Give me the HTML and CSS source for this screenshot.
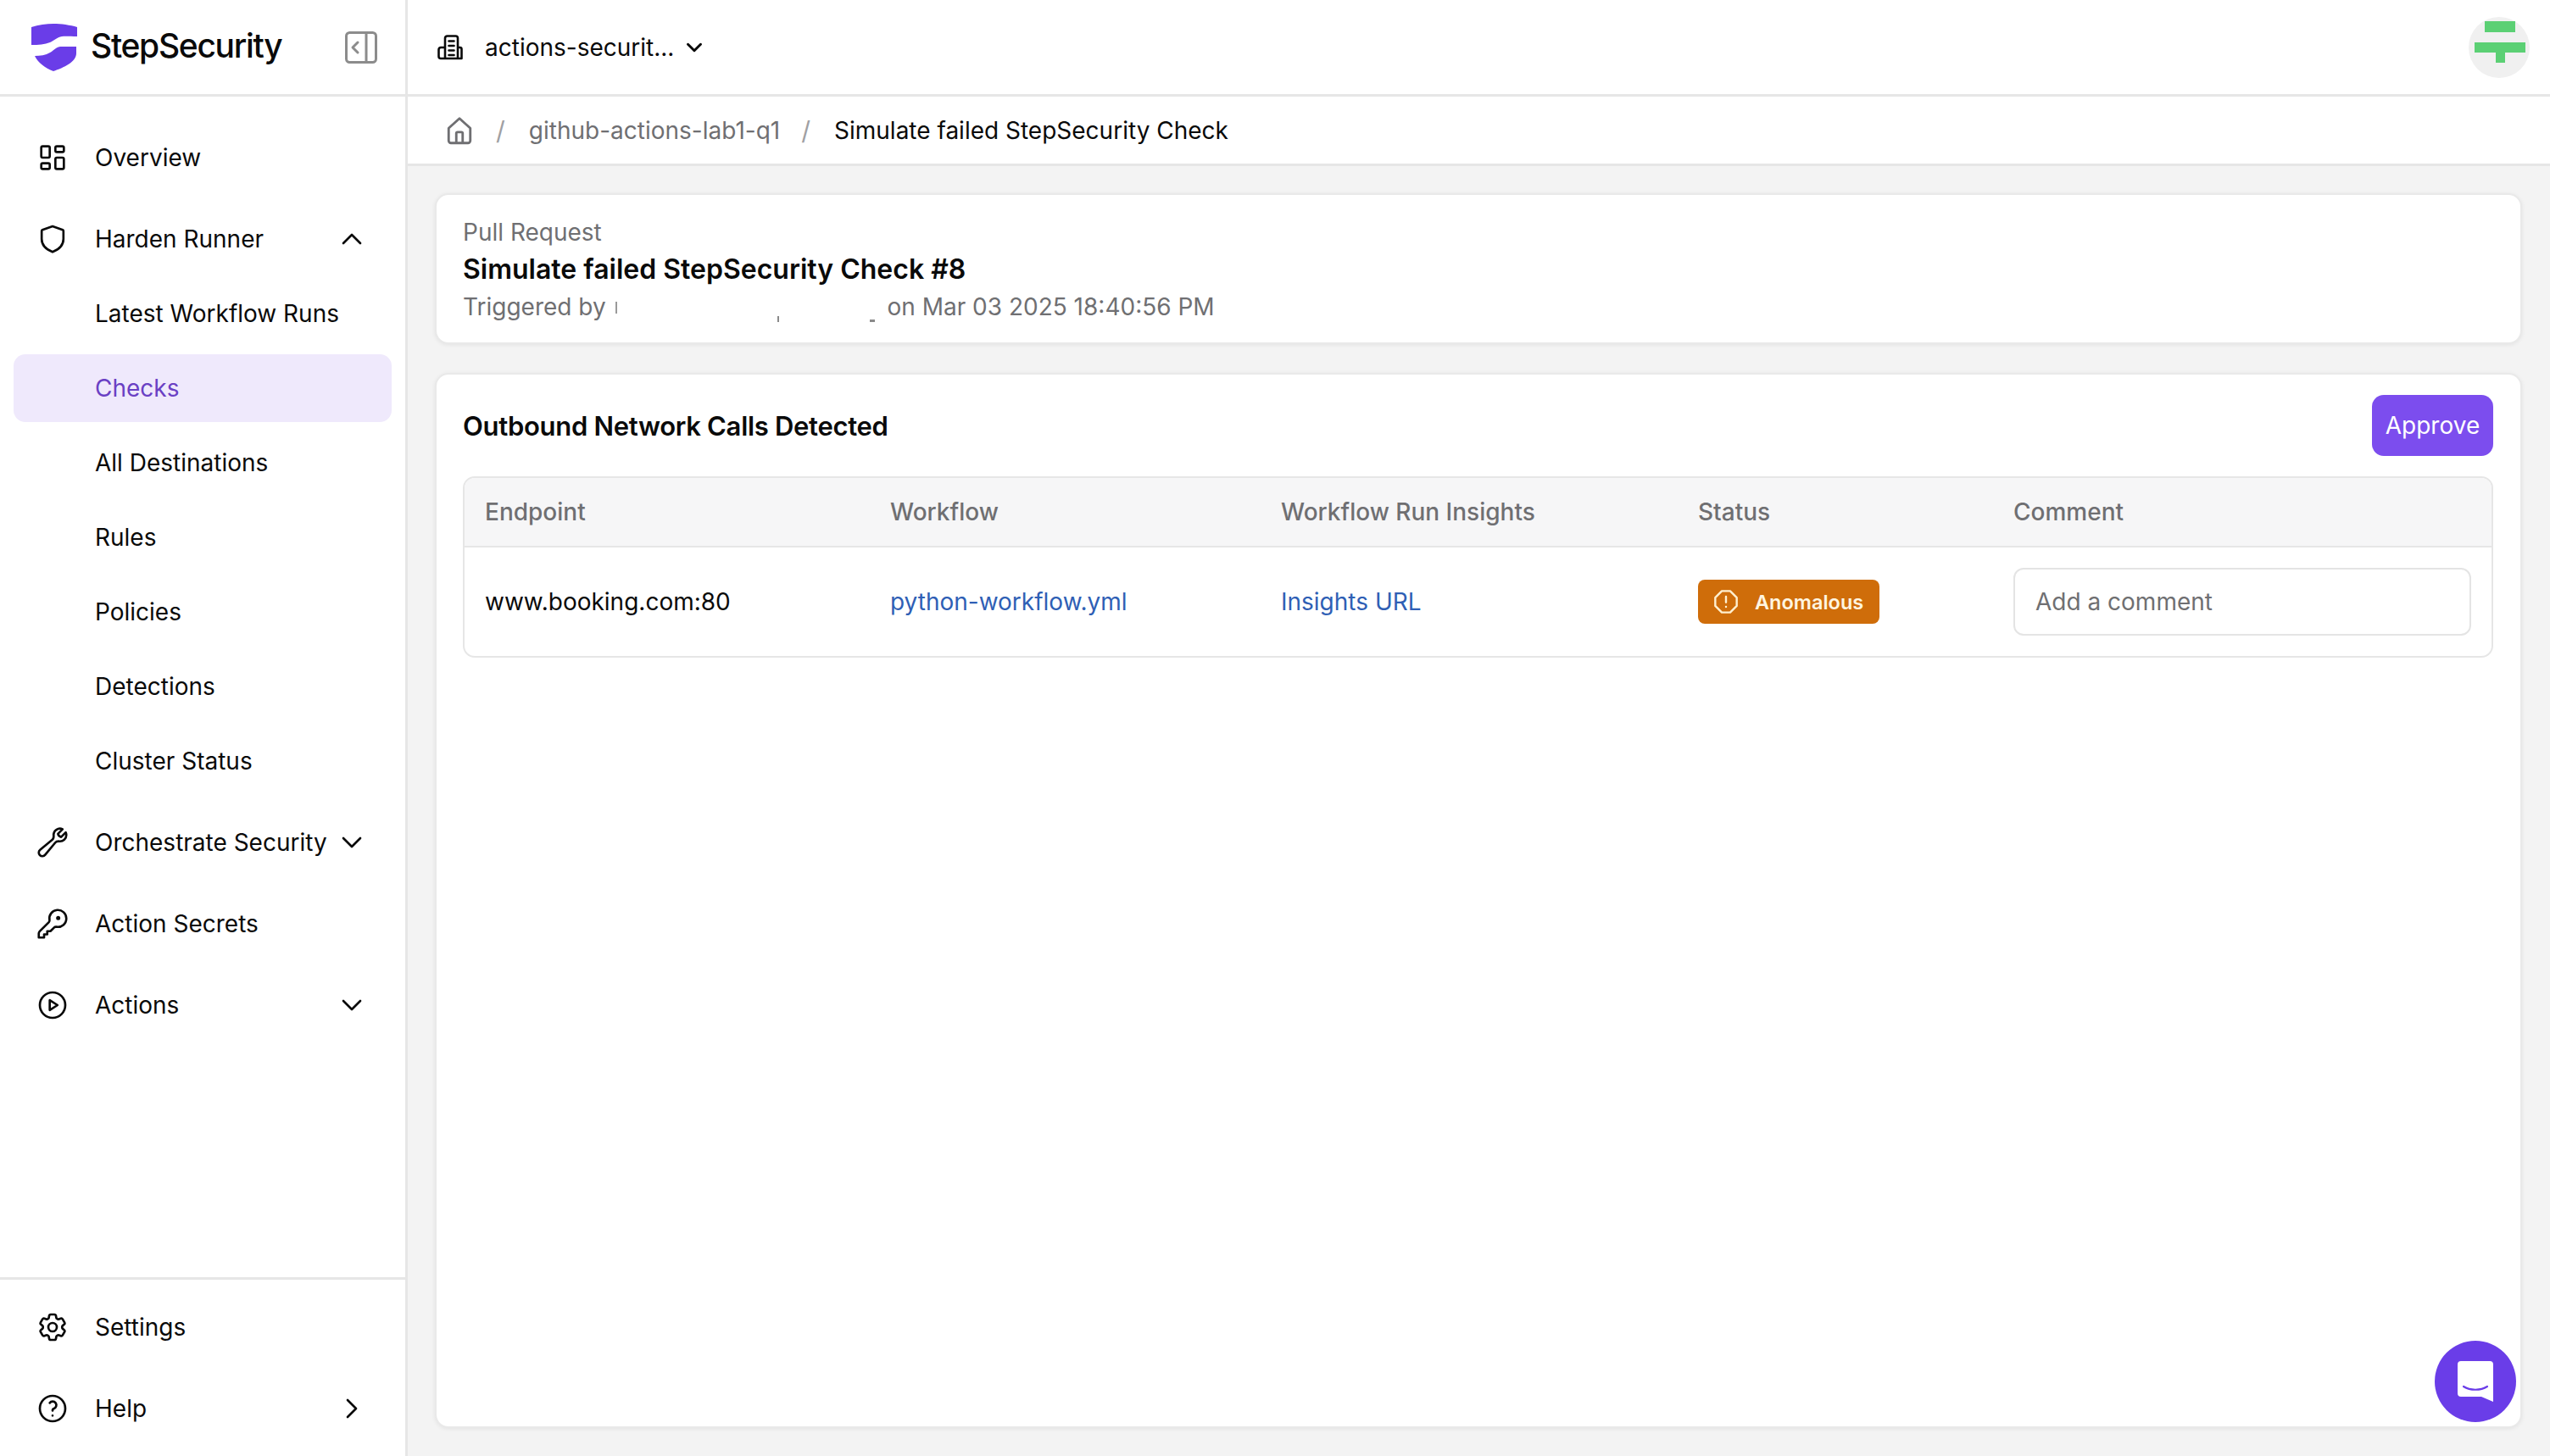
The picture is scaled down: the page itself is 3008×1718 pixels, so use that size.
FILE: index.html
```html
<!DOCTYPE html>
<html lang="en">
<head>
<meta charset="utf-8">
<title>StepSecurity</title>
<link rel="stylesheet" href="styles.css">
</head>
<body>
<aside class="sidebar">
  <div class="brand">
    <svg class="logo" viewBox="0 0 54 56"><path d="M0 4C8 1.2 18 0 26 0C35 0 46 1.5 54 4V15C46 15 40 14.5 36 15C30 16 26.5 20 22 22C16 24.5 8 25 0 25Z"/><path d="M53 27V35C53 45 38 52 26 56C16 52 8 46 4 38C10 38 17 37 22 34C26 32 28 28 34 27Z"/></svg>
    <span class="brand-name">StepSecurity</span>
    <svg class="collapse" viewBox="0 0 38 38"><rect x="1.500" y="1.500" width="35" height="35" rx="4"/><path d="M25 1.500V36.500M15 13l-6 6 6 6"/></svg>
  </div>
  <nav class="nav">
    <a class="item"><svg class="ic" viewBox="0 0 24 24"><path d="M5 4h4a1 1 0 0 1 1 1v6a1 1 0 0 1-1 1H5a1 1 0 0 1-1-1V5a1 1 0 0 1 1-1M5 16h4a1 1 0 0 1 1 1v2a1 1 0 0 1-1 1H5a1 1 0 0 1-1-1v-2a1 1 0 0 1 1-1M15 12h4a1 1 0 0 1 1 1v6a1 1 0 0 1-1 1h-4a1 1 0 0 1-1-1v-6a1 1 0 0 1 1-1M15 4h4a1 1 0 0 1 1 1v2a1 1 0 0 1-1 1h-4a1 1 0 0 1-1-1V5a1 1 0 0 1 1-1"/></svg><span>Overview</span></a>
    <div class="group">
      <a class="item"><svg class="ic" viewBox="0 0 24 24"><path d="M12 3L19.200 5.600a.8.8 0 0 1 .5.8V12c0 4.200-3 7.300-7.700 9.200C7.300 19.300 4.300 16.200 4.300 12V6.400a.8.8 0 0 1 .5-.8Z"/></svg><span>Harden Runner</span><svg class="chev" viewBox="0 0 24 24"><path d="M6 15l6-6 6 6"/></svg></a>
      <a class="item sub">Latest Workflow Runs</a>
      <a class="item sub active">Checks</a>
      <a class="item sub">All Destinations</a>
      <a class="item sub">Rules</a>
      <a class="item sub">Policies</a>
      <a class="item sub">Detections</a>
      <a class="item sub">Cluster Status</a>
    </div>
    <a class="item"><svg class="ic" viewBox="0 0 24 24"><path d="M21.750 6.750a4.500 4.500 0 0 1-4.884 4.484c-1.076-.091-2.264.071-2.950.904l-7.152 8.684a2.548 2.548 0 1 1-3.586-3.586l8.684-7.152c.833-.686.995-1.874.904-2.950a4.500 4.500 0 0 1 6.336-4.486l-3.276 3.276a3.004 3.004 0 0 0 2.250 2.250l3.276-3.276c.24.565.398 1.240.398 1.852Z"/></svg><span>Orchestrate Security</span><svg class="chev" viewBox="0 0 24 24"><path d="M6 9l6 6 6-6"/></svg></a>
    <a class="item"><svg class="ic" viewBox="0 0 24 24"><path d="M21.750 8.250a6 6 0 0 1-7.029 5.912c-.563-.097-1.159.026-1.563.43L10.500 17.250H8.250v2.250H6v2.250H2.250v-2.818c0-.597.237-1.170.659-1.591l6.499-6.499c.404-.404.527-1 .43-1.563A6 6 0 1 1 21.750 8.250Z"/><circle class="dot" cx="16" cy="8" r=".7"/></svg><span>Action Secrets</span></a>
    <a class="item"><svg class="ic" viewBox="0 0 24 24"><circle cx="12" cy="12" r="9"/><path d="M10 8.500v7l5.500-3.500Z"/></svg><span>Actions</span><svg class="chev" viewBox="0 0 24 24"><path d="M6 9l6 6 6-6"/></svg></a>
  </nav>
  <div class="nav-bottom">
    <a class="item"><svg class="ic" viewBox="0 0 24 24"><path d="M9.594 3.940c.09-.542.56-.94 1.110-.94h2.593c.55 0 1.020.398 1.110.94l.213 1.281c.063.374.313.686.645.87.074.04.147.083.22.127.325.196.72.257 1.075.124l1.217-.456a1.125 1.125 0 0 1 1.370.49l1.296 2.247a1.125 1.125 0 0 1-.26 1.431l-1.003.827c-.293.241-.438.613-.43.992a7.723 7.723 0 0 1 0 .255c-.008.378.137.75.43.991l1.004.827c.424.35.534.955.26 1.430l-1.298 2.247a1.125 1.125 0 0 1-1.369.491l-1.217-.456c-.355-.133-.75-.072-1.076.124a6.470 6.470 0 0 1-.22.128c-.331.183-.581.495-.644.869l-.213 1.281c-.09.543-.56.94-1.110.94h-2.594c-.55 0-1.019-.398-1.110-.94l-.213-1.281c-.062-.374-.312-.686-.644-.87a6.520 6.520 0 0 1-.22-.127c-.325-.196-.72-.257-1.076-.124l-1.217.456a1.125 1.125 0 0 1-1.369-.49l-1.297-2.247a1.125 1.125 0 0 1 .26-1.431l1.004-.827c.292-.24.437-.613.43-.991a6.932 6.932 0 0 1 0-.255c.007-.38-.138-.751-.43-.992l-1.004-.827a1.125 1.125 0 0 1-.26-1.430l1.297-2.247a1.125 1.125 0 0 1 1.370-.491l1.216.456c.356.133.751.072 1.076-.124.072-.044.146-.086.22-.128.332-.183.582-.495.644-.869l.214-1.280Z"/><circle cx="12" cy="12" r="3"/></svg><span>Settings</span></a>
    <a class="item"><svg class="ic" viewBox="0 0 24 24"><circle cx="12" cy="12" r="9"/><path d="M12 17v.01M12 13.500a1.500 1.500 0 0 1 1-1.500 2.600 2.600 0 1 0-3-4"/></svg><span>Help</span><svg class="chev" viewBox="0 0 24 24"><path d="M9 6l6 6-6 6"/></svg></a>
  </div>
</aside>
<div class="page">
  <header class="topbar">
    <svg class="building" viewBox="0 0 30 30"><path d="M9 28V4a2.500 2.500 0 0 1 2.500-2.500h10A2.500 2.500 0 0 1 24 4v24M9 15H4a2.500 2.500 0 0 0-2.500 2.500v8A2.500 2.500 0 0 0 4 28h24.500V17a2 2 0 0 0-2-2H24M13.500 7.500h6M13.500 13h6M13.500 18.500h6M13.500 24h6"/></svg>
    <span class="org">actions-securit...</span>
    <svg class="org-chev" viewBox="0 0 24 24"><path d="M6 9l6 6 6-6"/></svg>
    <div class="avatar">
      <svg viewBox="0 0 72 72"><path d="M19 5h36v13H19zM7 30h60v12H43v12H32V42H7z"/></svg>
    </div>
  </header>
  <div class="crumbs">
    <svg class="home" viewBox="0 0 24 24"><path d="M3.500 10.200 12 2.500l8.500 7.700V20a1.800 1.800 0 0 1-1.800 1.800H5.300A1.800 1.800 0 0 1 3.500 20ZM9.500 21.800V14.200a1 1 0 0 1 1-1h3a1 1 0 0 1 1 1v7.600"/></svg>
    <span class="slash">/</span>
    <span class="crumb">github-actions-lab1-q1</span>
    <span class="slash">/</span>
    <span class="crumb current">Simulate failed StepSecurity Check</span>
  </div>
  <main class="content">
    <section class="card summary">
      <div class="muted">Pull Request</div>
      <h1 class="pr-title">Simulate failed StepSecurity Check #8</h1>
      <div class="muted">Triggered by <span class="redacted"></span> on Mar 03 2025 18:40:56 PM</div>
    </section>
    <section class="card detail">
      <div class="detail-head">
        <h2 class="detail-title">Outbound Network Calls Detected</h2>
        <button class="approve">Approve</button>
      </div>
      <div class="table-wrap">
        <table class="calls">
          <colgroup><col class="c1"><col class="c2"><col class="c3"><col class="c4"><col class="c5"></colgroup>
          <thead><tr><th>Endpoint</th><th>Workflow</th><th>Workflow Run Insights</th><th>Status</th><th>Comment</th></tr></thead>
          <tbody><tr>
            <td>www.booking.com:80</td>
            <td><a class="link">python-workflow.yml</a></td>
            <td><a class="link">Insights URL</a></td>
            <td><span class="badge"><svg viewBox="0 0 24 24"><path d="M8.300 2.500h7.400l5.800 5.800v7.400l-5.800 5.800H8.300l-5.800-5.800V8.300ZM12 7.500v5M12 16.400v.1"/></svg>Anomalous</span></td>
            <td><input class="comment" type="text" placeholder="Add a comment"></td>
          </tr></tbody>
        </table>
      </div>
    </section>
  </main>
</div>
<button class="chat" aria-label="Chat">
  <svg viewBox="0 0 42 48"><path d="M4 0h34a4 4 0 0 1 4 4v44l-14-6H4a4 4 0 0 1-4-4V4a4 4 0 0 1 4-4Z"/><path class="smile" d="M7 30c8 5 20 5 28 0"/></svg>
</button>
</body>
</html>
```
FILE: styles.css
```css
* { box-sizing: border-box; }
html, body { height: 100%; }
body {
  margin: 0;
  display: flex;
  height: 1718px;
  overflow: hidden;
  background: #f3f3f3;
  color: #0a0a0a;
  font-family: Inter, "Liberation Sans", sans-serif;
  font-size: 28px;
}
.sidebar {
  width: 481px;
  flex: none;
  display: flex;
  flex-direction: column;
  background: #fff;
  border-right: 3px solid #e6e6e6;
}
.brand {
  height: 114px;
  flex: none;
  display: flex;
  align-items: center;
  padding: 0 33px 0 37px;
  border-bottom: 3px solid #e6e6e6;
}
.logo { width: 54px; height: 56px; fill: #6a3de8; flex: none; }
.brand-name {
  margin-left: 16px;
  font-size: 39px;
  font-weight: 500;
  letter-spacing: -1.3px;
  color: #0a0a0a;
  position: relative;
  top: -2px;
}
.collapse {
  width: 38px;
  height: 38px;
  margin-left: auto;
  fill: none;
  stroke: #8c8c8c;
  stroke-width: 3;
  stroke-linecap: round;
  stroke-linejoin: round;
}
.nav {
  flex: 1;
  display: flex;
  flex-direction: column;
  gap: 16px;
  padding: 32px 16px 0;
}
.group { display: flex; flex-direction: column; gap: 8px; }
.nav-bottom {
  display: flex;
  flex-direction: column;
  gap: 16px;
  padding: 16px 16px 16px;
  border-top: 3px solid #e6e6e6;
}
.item {
  height: 80px;
  display: flex;
  align-items: center;
  padding: 0 27px 0 26px;
  border-radius: 14px;
  color: #0a0a0a;
}
.item > span { flex: 1; margin-left: 30px; }
.sub { padding-left: 96px; }
.active { background: #efe9fc; color: #6a40c4; }
.ic, .chev {
  width: 40px;
  height: 40px;
  flex: none;
  fill: none;
  stroke: #0a0a0a;
  stroke-width: 1.6;
  stroke-linecap: round;
  stroke-linejoin: round;
}
.dot { fill: #0a0a0a; }
.page {
  flex: 1;
  min-width: 0;
  display: flex;
  flex-direction: column;
}
.topbar {
  height: 114px;
  flex: none;
  display: flex;
  align-items: center;
  padding: 0 24px 0 35px;
  background: #fff;
  border-bottom: 3px solid #e6e6e6;
}
.building {
  width: 30px;
  height: 30px;
  fill: none;
  stroke: #0a0a0a;
  stroke-width: 2.6;
  stroke-linecap: round;
  stroke-linejoin: round;
}
.org { margin-left: 26px; }
.org-chev {
  width: 30px;
  height: 30px;
  margin-left: 9px;
  fill: none;
  stroke: #0a0a0a;
  stroke-width: 2.4;
  stroke-linecap: round;
  stroke-linejoin: round;
}
.avatar {
  width: 72px;
  height: 72px;
  margin-left: auto;
  border-radius: 50%;
  background: #f0f0f0;
}
.avatar svg { display: block; width: 72px; height: 72px; fill: #5bd074; }
.crumbs {
  height: 82px;
  flex: none;
  display: flex;
  align-items: center;
  padding-left: 43px;
  background: #fff;
  border-bottom: 3px solid #e6e6e6;
}
.home {
  width: 36px;
  height: 36px;
  fill: none;
  stroke: #6f6f72;
  stroke-width: 1.9;
  stroke-linecap: round;
  stroke-linejoin: round;
}
.slash { margin: 0 28px 0 25px; color: #a0a0a3; font-size: 30px; }
.crumb { color: #6f6f72; }
.current { color: #0a0a0a; }
.content {
  flex: 1;
  min-height: 0;
  display: flex;
  flex-direction: column;
  gap: 34px;
  padding: 32px 33px 33px 32px;
}
.card {
  background: #fff;
  border: 2px solid #e9e9e9;
  border-radius: 16px;
  box-shadow: 0 1px 5px rgba(0,0,0,.07);
}
.summary { height: 178px; padding: 22px 32px 0 31px; }
.muted { color: #6f6f72; line-height: 44px; }
.pr-title { margin: 0; font-size: 32px; font-weight: 600; line-height: 44px; color: #0a0a0a; }
.redacted {
  display: inline-block;
  width: 316px;
  height: 30px;
  vertical-align: -8px;
  background-image:
    linear-gradient(#9a9a9a, #9a9a9a),
    linear-gradient(#8a8a8a, #8a8a8a),
    linear-gradient(#8a8a8a, #8a8a8a);
  background-repeat: no-repeat;
  background-size: 2px 14px, 2px 7px, 6px 3px;
  background-position: 3px 6px, 194px 23px, 303px 27px;
}
.detail { flex: 1; padding: 24px 32px 0 31px; }
.detail-head { display: flex; align-items: center; justify-content: space-between; margin-bottom: 24px; }
.detail-title { margin: 0; font-size: 31px; font-weight: 600; color: #0a0a0a; letter-spacing: -.3px; }
.approve {
  width: 143px;
  height: 72px;
  padding: 0;
  border: 0;
  border-radius: 14px;
  background: #7c4dee;
  color: #fff;
  font: inherit;
}
.table-wrap {
  border: 2px solid #e6e6e6;
  border-radius: 14px;
  overflow: hidden;
}
.calls { width: 100%; border-collapse: collapse; table-layout: fixed; }
.c1 { width: 478px; }
.c2 { width: 461px; }
.c3 { width: 492px; }
.c4 { width: 372px; }
.calls th {
  height: 81px;
  padding: 0 0 0 24px;
  text-align: left;
  font-weight: 500;
  color: #6f6f72;
  background: #f6f6f7;
  border-bottom: 2px solid #e6e6e6;
}
.calls td { height: 129px; padding: 0 0 0 24px; }
.link { color: #2f5fb5; }
.badge {
  display: inline-flex;
  align-items: center;
  width: 214px;
  height: 52px;
  padding-left: 17px;
  border-radius: 8px;
  background: #cf6d0a;
  color: #fff5e0;
  font-size: 23.5px;
  font-weight: 600;
}
.badge svg {
  width: 32px;
  height: 32px;
  margin-right: 18px;
  fill: none;
  stroke: #fff0d0;
  stroke-width: 1.8;
  stroke-linecap: round;
  stroke-linejoin: round;
}
.comment {
  display: block;
  width: 540px;
  height: 80px;
  padding: 0 24px;
  border: 2px solid #e4e4e4;
  border-radius: 12px;
  background: #fff;
  font: inherit;
  color: #0a0a0a;
}
.comment::placeholder { color: #6f6f72; opacity: 1; }
.chat {
  position: absolute;
  left: 2872px;
  top: 1582px;
  width: 96px;
  height: 96px;
  padding: 0;
  display: flex;
  align-items: center;
  justify-content: center;
  border: 0;
  border-radius: 50%;
  background: #6a3de8;
}
.chat svg { width: 42px; height: 48px; fill: #fff; }
.smile { fill: none; stroke: #6a3de8; stroke-width: 2.2; stroke-linecap: round; }
```
